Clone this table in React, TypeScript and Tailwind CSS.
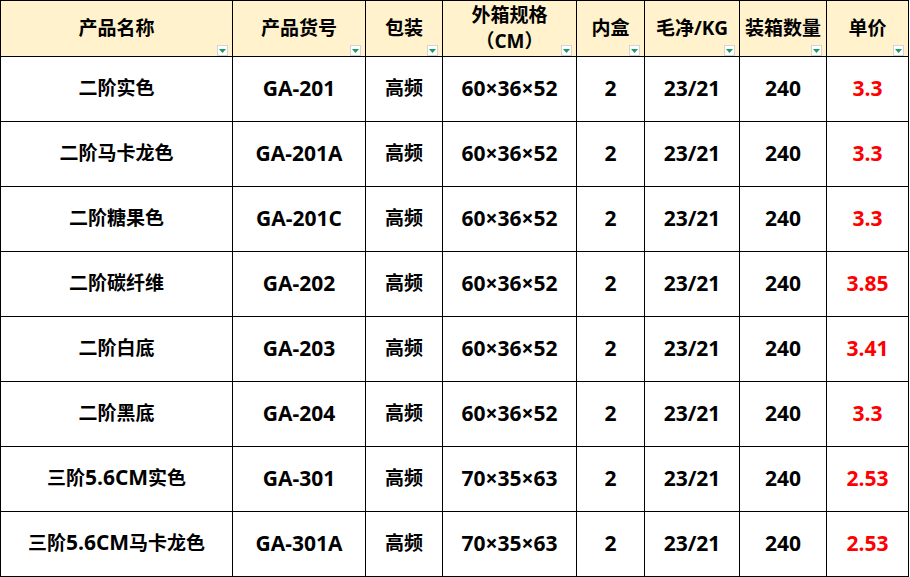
import React from "react";

type Row = {
  name: string;
  code: string;
  pack: string;
  size: string;
  inner: string;
  weight: string;
  qty: string;
  price: string;
};

const rows: Row[] = [
  { name: "二阶实色", code: "GA-201", pack: "高频", size: "60×36×52", inner: "2", weight: "23/21", qty: "240", price: "3.3" },
  { name: "二阶马卡龙色", code: "GA-201A", pack: "高频", size: "60×36×52", inner: "2", weight: "23/21", qty: "240", price: "3.3" },
  { name: "二阶糖果色", code: "GA-201C", pack: "高频", size: "60×36×52", inner: "2", weight: "23/21", qty: "240", price: "3.3" },
  { name: "二阶碳纤维", code: "GA-202", pack: "高频", size: "60×36×52", inner: "2", weight: "23/21", qty: "240", price: "3.85" },
  { name: "二阶白底", code: "GA-203", pack: "高频", size: "60×36×52", inner: "2", weight: "23/21", qty: "240", price: "3.41" },
  { name: "二阶黑底", code: "GA-204", pack: "高频", size: "60×36×52", inner: "2", weight: "23/21", qty: "240", price: "3.3" },
  { name: "三阶5.6CM实色", code: "GA-301", pack: "高频", size: "70×35×63", inner: "2", weight: "23/21", qty: "240", price: "2.53" },
  { name: "三阶5.6CM马卡龙色", code: "GA-301A", pack: "高频", size: "70×35×63", inner: "2", weight: "23/21", qty: "240", price: "2.53" },
];

const cols = "grid-cols-[232px_133px_77px_134px_68px_95px_87px_82px]";

// latin runs in the source sheet render wider than the CJK glyphs, so bump them
function Mixed({ text }: { text: string }) {
  const parts = text.split(/([0-9A-Za-z.]+)/).filter(Boolean);
  return (
    <span>
      {parts.map((p, i) =>
        /[0-9A-Za-z]/.test(p) ? (
          <span key={i} className="text-[21px]">
            {p}
          </span>
        ) : (
          <span key={i}>{p}</span>
        )
      )}
    </span>
  );
}

function FilterButton() {
  return (
    <span className="absolute bottom-0 right-[4px] flex h-[11px] w-[11px] items-center justify-center border border-[#d4d4d4] bg-white">
      <svg width="7" height="4" viewBox="0 0 7 4">
        <polygon points="0,0 7,0 3.5,4" fill="#1f9a5e" />
      </svg>
    </span>
  );
}

function HeadCell({ children }: { children: React.ReactNode }) {
  return (
    <div className="relative flex h-[56px] flex-col items-center justify-center border-r border-b border-black bg-[#fff2cc] pb-[2px] leading-[26px]">
      {children}
      <FilterButton />
    </div>
  );
}

function Cell({ children, red, latin }: { children: React.ReactNode; red?: boolean; latin?: boolean }) {
  return (
    <div
      className={
        "flex h-[65px] items-center justify-center border-r border-b border-black bg-white pb-[3px] leading-[28px] " +
        (latin ? "text-[21px] " : "") +
        (red ? "text-[#ff0000]" : "text-black")
      }
    >
      {children}
    </div>
  );
}

export default function App() {
  return (
    <div
      className="h-[577px] w-[910px] bg-white"
      style={{ fontFamily: '"Open Sans", "Noto Sans CJK SC", sans-serif' }}
    >
      <div className={`grid w-[909px] ${cols} border-t border-l border-black text-[19px] font-bold text-black`}>
        <HeadCell>产品名称</HeadCell>
        <HeadCell>产品货号</HeadCell>
        <HeadCell>包装</HeadCell>
        <HeadCell>
          <span>外箱规格</span>
          <span>（CM）</span>
        </HeadCell>
        <HeadCell>内盒</HeadCell>
        <HeadCell>毛净/KG</HeadCell>
        <HeadCell>装箱数量</HeadCell>
        <HeadCell>单价</HeadCell>

        {rows.map((r) => (
          <React.Fragment key={r.code}>
            <Cell>
              <Mixed text={r.name} />
            </Cell>
            <Cell latin>{r.code}</Cell>
            <Cell>{r.pack}</Cell>
            <Cell latin>{r.size}</Cell>
            <Cell latin>{r.inner}</Cell>
            <Cell latin>{r.weight}</Cell>
            <Cell latin>{r.qty}</Cell>
            <Cell latin red>
              {r.price}
            </Cell>
          </React.Fragment>
        ))}
      </div>
    </div>
  );
}
